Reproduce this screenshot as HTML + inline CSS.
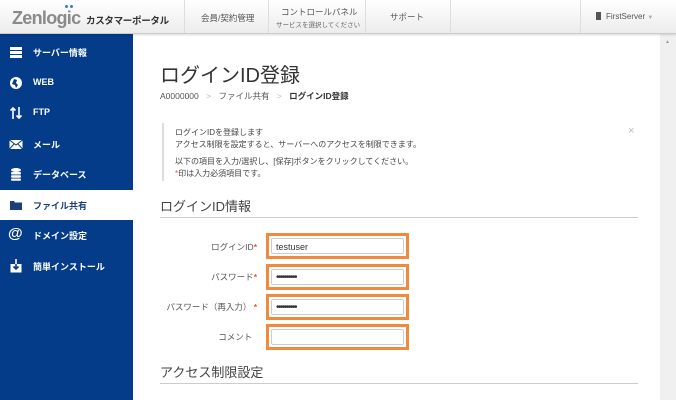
<!DOCTYPE html>
<html><head><meta charset="utf-8"><style>
*{margin:0;padding:0;box-sizing:border-box}
body{width:676px;height:400px;overflow:hidden;background:#fff;font-family:"Liberation Sans","Noto Sans CJK JP",sans-serif;color:#333;position:relative}
.hd{position:absolute;left:0;top:0;width:676px;height:34px;background:linear-gradient(#fff,#ececec);border-bottom:1px solid #ccc;box-shadow:0 1px 2px rgba(0,0,0,.15);z-index:2}
.sep{position:absolute;top:0;height:33px;width:1px;background:#ddd}
.t{position:absolute;white-space:nowrap}
.sb{position:absolute;left:0;top:34px;width:133px;height:366px;background:#043c8a}
.ni{position:absolute;left:0;width:133px;height:30px;color:#fff;font-size:9px;font-weight:bold}
.ni span{position:absolute;left:33px;top:9px}
.ni .ic{position:absolute;left:9px;top:8px;width:14px;height:14px}
.act{background:#fff;color:#1b3f7a}
.scroll{position:absolute;left:660px;top:34px;width:16px;height:366px;background:#f0f0f0}
.lab{position:absolute;font-size:8.5px;color:#555;text-align:right;width:120px;left:137px}
.lab b{color:#e5533c}
.inp{position:absolute;left:266px;width:143px;height:26px;border:3px solid #f08a3c;background:#fff}
.inp div{position:absolute;left:2px;top:2px;right:2px;bottom:2px;border:1px solid #ccc;border-radius:2px;font-size:9px;padding:3px 4px;color:#333}
.pw{font-size:10px!important;letter-spacing:-1.5px;padding-top:2px!important}
</style></head><body>
<div class="hd">
 <div class="t" style="left:12px;top:8px;font-size:18px;font-weight:bold;color:#8a8a8a;letter-spacing:-.7px">Zenlogic</div>
 <div class="t" style="left:65px;top:5px;width:3px;height:3px;border-radius:50%;background:#3a7bd5"></div>
 <div class="t" style="left:70px;top:5px;width:3px;height:3px;border-radius:50%;background:#3a7bd5"></div>
 <div class="t" style="left:86px;top:13px;font-size:9.5px;font-weight:bold;color:#333;letter-spacing:-.3px">カスタマーポータル</div>
 <div class="sep" style="left:184px"></div>
 <div class="t" style="left:201px;top:12px;font-size:8.5px;color:#555">会員/契約管理</div>
 <div class="sep" style="left:268px"></div>
 <div class="t" style="left:281px;top:6px;font-size:8.5px;color:#555">コントロールパネル</div>
 <div class="t" style="left:276px;top:19px;font-size:6.5px;color:#666">サービスを選択してください</div>
 <div class="sep" style="left:365px"></div>
 <div class="t" style="left:390px;top:11px;font-size:8.5px;color:#555">サポート</div>
 <div class="sep" style="left:450px"></div>
 <div class="sep" style="left:580px"></div>
 <div class="t" style="left:596px;top:12px;width:5px;height:8px;background:#555"></div>
 <div class="t" style="left:606px;top:12px;font-size:8px;color:#555">FirstServer <span style="color:#aaa;font-size:6px">▼</span></div>
</div>
<div class="sb">
 <div class="ni" style="top:3px"><svg class="ic" viewBox="0 0 14 14"><rect x="1" y="2" width="12" height="3" fill="#fff"/><rect x="1" y="6" width="12" height="3" fill="#fff"/><rect x="1" y="10" width="12" height="3" fill="#fff"/></svg><span>サーバー情報</span></div>
 <div class="ni" style="top:34px"><svg class="ic" viewBox="0 0 14 14"><circle cx="7" cy="7" r="6" fill="#fff"/><path d="M5 3l3 1-1 3 2 2-2 3-1-3-3-1z" fill="#043c8a"/></svg><span>WEB</span></div>
 <div class="ni" style="top:64px"><svg class="ic" viewBox="0 0 14 14"><path d="M4 13V2M1.5 4.5L4 2l2.5 2.5M10 1v11M7.5 9.5L10 12l2.5-2.5" stroke="#fff" stroke-width="1.6" fill="none"/></svg><span>FTP</span></div>
 <div class="ni" style="top:95px"><svg class="ic" viewBox="0 0 14 14"><rect x="0.5" y="3" width="13" height="9" fill="#fff"/><path d="M.5 3L7 8l6.5-5M.5 12L5 7M13.5 12L9 7" stroke="#043c8a" stroke-width="1" fill="none"/></svg><span>メール</span></div>
 <div class="ni" style="top:125px"><svg class="ic" viewBox="0 0 14 14"><ellipse cx="7" cy="3" rx="5" ry="2" fill="#fff"/><rect x="2" y="5" width="10" height="2.5" rx="1" fill="#fff"/><rect x="2" y="8.3" width="10" height="2.5" rx="1" fill="#fff"/><rect x="2" y="11.5" width="10" height="2.3" rx="1" fill="#fff"/></svg><span>データベース</span></div>
 <div class="ni act" style="top:156px"><svg class="ic" viewBox="0 0 14 14"><path d="M1 3h4l1 1.5h7V12H1z" fill="#1b3f7a"/></svg><span>ファイル共有</span></div>
 <div class="ni" style="top:186px"><div class="ic" style="font-size:15px;top:5px;left:8px;font-weight:bold">@</div><span>ドメイン設定</span></div>
 <div class="ni" style="top:217px"><svg class="ic" viewBox="0 0 14 14"><rect x="1.5" y="5" width="11" height="8.5" fill="#fff"/><path d="M7 0v10M4.5 7.5L7 10l2.5-2.5" stroke="#043c8a" stroke-width="1.6" fill="none"/><path d="M7 0v5" stroke="#fff" stroke-width="1.6"/></svg><span>簡単インストール</span></div>
</div>
<div class="scroll"><div style="position:absolute;left:5px;top:5px;font-size:5px;color:#999">▲</div></div>
<div class="t" style="left:160px;top:59px;font-size:20px;color:#333">ログインID登録</div>
<div class="t" style="left:160px;top:90px;font-size:8.5px;color:#555">A0000000 <span style="color:#bbb;margin:0 5px">&gt;</span> ファイル共有 <span style="color:#bbb;margin:0 5px">&gt;</span> <b style="color:#333">ログインID登録</b></div>
<div class="t" style="left:162px;top:123px;width:2px;height:58px;background:#ddd"></div>
<div class="t" style="left:175px;top:127px;font-size:8px;color:#444;line-height:11.5px">ログインIDを登録します<br>アクセス制限を設定すると、サーバーへのアクセスを制限できます。</div>
<div class="t" style="left:175px;top:156px;font-size:8px;color:#444;line-height:12px">以下の項目を入力/選択し、[保存]ボタンをクリックしてください。<br><span style="color:#e5533c">*</span>印は入力必須項目です。</div>
<div class="t" style="left:628px;top:125px;font-size:11px;color:#bbb">×</div>
<div class="t" style="left:160px;top:196px;font-size:13px;color:#444">ログインID情報</div>
<div class="t" style="left:160px;top:217px;width:478px;height:1px;background:#ccc"></div>
<div class="lab" style="top:241px">ログインID<b>*</b></div>
<div class="lab" style="top:271px">パスワード<b>*</b></div>
<div class="lab" style="top:301px">パスワード（再入力）<b> *</b></div>
<div class="lab" style="top:331px">コメント&nbsp;&nbsp;</div>
<div class="inp" style="top:233px"><div>testuser</div></div>
<div class="inp" style="top:264px"><div class="pw">••••••••••</div></div>
<div class="inp" style="top:294px"><div class="pw">••••••••••</div></div>
<div class="inp" style="top:324px"><div></div></div>
<div class="t" style="left:160px;top:362px;font-size:13px;color:#444">アクセス制限設定</div>
<div class="t" style="left:160px;top:383px;width:478px;height:1px;background:#ccc"></div>
</body></html>
